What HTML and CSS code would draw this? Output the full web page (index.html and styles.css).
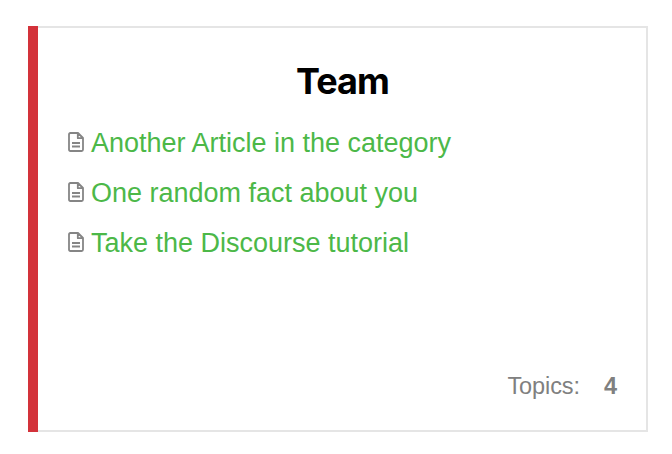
FILE: index.html
```html
<!DOCTYPE html>
<html lang="en">
<head>
<meta charset="utf-8">
<title>Team</title>
<link rel="stylesheet" href="styles.css">
</head>
<body>
<svg class="symbols" aria-hidden="true">
<symbol id="doc" viewBox="0 0 16 20">
<path d="M2.4 1H10L15 6V17.6Q15 19 13.6 19H2.4Q1 19 1 17.6V2.4Q1 1 2.4 1ZM9.8 1.4V6.2H14.6M4 11H12M4 14.5H12" fill="none" stroke="#858585" stroke-width="1.8" stroke-linejoin="round"/>
</symbol>
</svg>
<div class="category">
<div class="accent"></div>
<section class="content">
<h3 class="title">Team</h3>
<ul class="topics">
<li><svg class="icon"><use href="#doc"/></svg><a>Another Article in the category</a></li>
<li><svg class="icon"><use href="#doc"/></svg><a>One random fact about you</a></li>
<li><svg class="icon"><use href="#doc"/></svg><a>Take the Discourse tutorial</a></li>
</ul>
<footer class="stats"><span>Topics:</span><strong>4</strong></footer>
</section>
</div>
</body>
</html>
```
FILE: styles.css
```css
* { box-sizing: border-box; }
body { margin: 0; padding: 26px 24px 22px 28px; height: 454px; background: #fff; font-family: "Liberation Sans", Arial, sans-serif; }
.symbols { display: none; }
.category { height: 406px; display: flex; }
.accent { width: 10px; background: #d3323a; }
.content { flex: 1; display: flex; flex-direction: column; border: 2px solid #e5e5e5; border-left: 0; padding: 31px 29px 28px 30px; }
.title { margin: 0; font: 700 36px/44px Inter, sans-serif; letter-spacing: -1px; text-align: center; color: #000; }
.topics { list-style: none; margin: 14px 0 0; padding: 0; }
.topics li { display: flex; align-items: center; height: 50px; font-size: 27px; color: #4cb848; white-space: nowrap; }
.topics a { padding-top: 2px; letter-spacing: -0.01px; }
.icon { width: 16px; height: 20px; margin-right: 7px; }
.stats { margin-top: auto; display: flex; justify-content: flex-end; gap: 24px; font-size: 23.5px; line-height: 32px; color: #808080; }
.stats span { letter-spacing: -0.1px; }
```
